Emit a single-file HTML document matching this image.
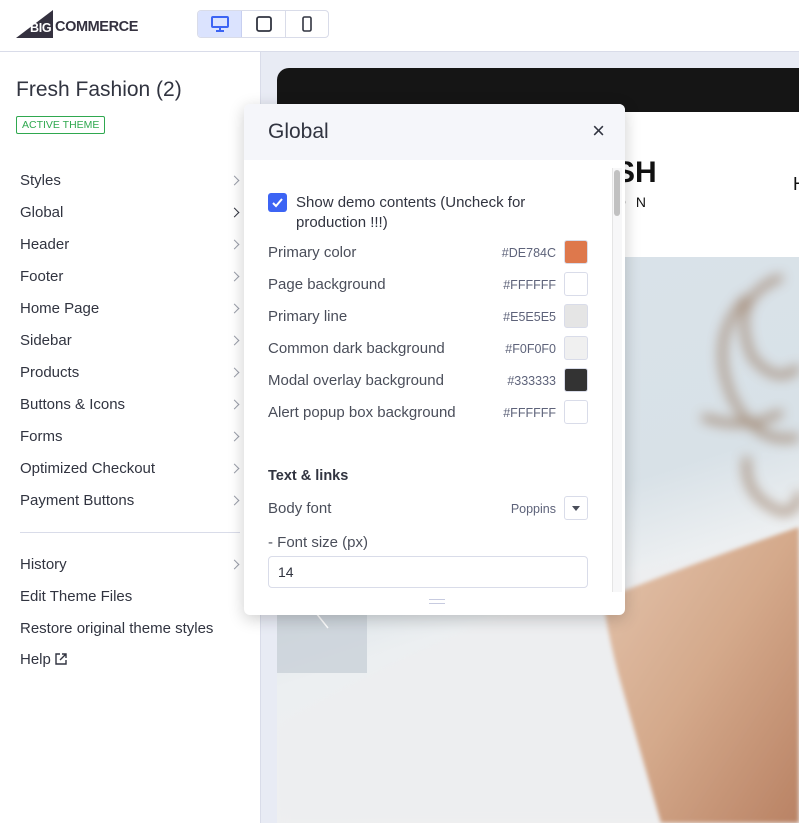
<!DOCTYPE html>
<html><head><meta charset="utf-8"><style>
*{margin:0;padding:0;box-sizing:border-box}
body{width:799px;height:823px;overflow:hidden;font-family:"Liberation Sans",sans-serif;background:#fff;position:relative;color:#313440}
.top{position:absolute;left:0;top:0;width:799px;height:52px;border-bottom:1px solid #d9dce9;background:#fff}
.side{position:absolute;left:0;top:52px;width:261px;height:771px;border-right:1px solid #d9dce9;background:#fff}
.prev{position:absolute;left:261px;top:52px;width:538px;height:771px;background:#e8ebf4;overflow:hidden}
.item{position:absolute;left:20px;font-size:15px;color:#313440}
.chev{position:absolute;left:231px;width:7px;height:7px;border-right:1.5px solid #9a9ea9;border-top:1.5px solid #9a9ea9;transform:rotate(45deg)}
.modal{position:absolute;left:244px;top:104px;width:381px;height:511px;background:#fff;border-radius:6px;box-shadow:0 4px 16px rgba(0,0,0,.2);overflow:hidden}
.mh{height:56px;background:#f5f6fa;padding:16px 24px;font-size:21px;color:#313440}
.row{position:absolute;left:24px;font-size:15px;color:#4a4e5a}
.hex{position:absolute;right:69px;font-size:12.5px;color:#5e637a}
.sw{position:absolute;left:320px;width:24px;height:24px;border:1px solid #d9dce9;border-radius:3px}
</style></head><body>
<div class="top">
 <svg style="position:absolute;left:16px;top:10px" width="40" height="28"><polygon points="0,28 37,28 37,0" fill="#34313f"/></svg>
 <div style="position:absolute;left:30px;top:21px;font-size:12.5px;font-weight:bold;color:#fff;letter-spacing:-0.3px">BIG</div>
 <div style="position:absolute;left:55px;top:19px;font-size:14.5px;font-weight:bold;color:#34313f;letter-spacing:-0.4px">COMMERCE</div>
 <div style="position:absolute;left:197px;top:10px;width:132px;height:28px;border:1px solid #d9dce9;border-radius:4px;display:flex">
  <div style="width:44px;background:#dbe3fe;border-right:1px solid #c7cff0;border-radius:3px 0 0 3px;display:flex;align-items:center;justify-content:center"><svg width="18" height="16"><rect x="1" y="1" width="16" height="10" rx="1" fill="none" stroke="#3c64f4" stroke-width="2"/><rect x="8" y="11" width="2" height="3" fill="#3c64f4"/><rect x="5" y="14" width="8" height="2" fill="#3c64f4"/></svg></div>
  <div style="width:44px;border-right:1px solid #d9dce9;display:flex;align-items:center;justify-content:center"><svg width="16" height="16"><rect x="1" y="1" width="14" height="14" rx="2" fill="none" stroke="#313440" stroke-width="1.8"/></svg></div>
  <div style="width:42px;display:flex;align-items:center;justify-content:center"><svg width="10" height="16"><rect x="1" y="1" width="8" height="14" rx="1.5" fill="none" stroke="#313440" stroke-width="1.6"/></svg></div>
 </div>
</div>
<div class="side">
 <div style="position:absolute;left:16px;top:26px;font-size:21px;color:#313440">Fresh Fashion (2)</div>
 <div style="position:absolute;left:16px;top:64px;border:1px solid #2fa84f;color:#2fa84f;font-size:10.5px;padding:2px 5px;border-radius:2px">ACTIVE THEME</div>
</div>
<div class="item" style="top:172px">Styles</div><div class="chev" style="top:177px"></div>
<div class="item" style="top:204px">Global</div><div class="chev" style="top:209px;border-color:#313440"></div>
<div class="item" style="top:236px">Header</div><div class="chev" style="top:241px"></div>
<div class="item" style="top:268px">Footer</div><div class="chev" style="top:273px"></div>
<div class="item" style="top:300px">Home Page</div><div class="chev" style="top:305px"></div>
<div class="item" style="top:332px">Sidebar</div><div class="chev" style="top:337px"></div>
<div class="item" style="top:364px">Products</div><div class="chev" style="top:369px"></div>
<div class="item" style="top:396px">Buttons &amp; Icons</div><div class="chev" style="top:401px"></div>
<div class="item" style="top:428px">Forms</div><div class="chev" style="top:433px"></div>
<div class="item" style="top:460px">Optimized Checkout</div><div class="chev" style="top:465px"></div>
<div class="item" style="top:492px">Payment Buttons</div><div class="chev" style="top:497px"></div>
<div style="position:absolute;left:20px;top:532px;width:220px;height:1px;background:#d9dce9"></div>
<div class="item" style="top:556px">History</div><div class="chev" style="top:561px"></div>
<div class="item" style="top:588px">Edit Theme Files</div>
<div class="item" style="top:620px">Restore original theme styles</div>
<div class="item" style="top:651px">Help <svg width="12" height="12" style="vertical-align:-1px"><path d="M5 1H1v10h10V7M7 1h4v4M11 1L5 7" fill="none" stroke="#313440" stroke-width="1.4"/></svg></div>
<div class="prev">
 <div style="position:absolute;left:16px;top:16px;width:540px;height:44px;background:#151515;border-radius:12px 0 0 0"></div>
 <div style="position:absolute;left:16px;top:60px;width:540px;height:145px;background:#fff"></div>
 <div style="position:absolute;left:354px;top:104px;font-size:30px;font-weight:bold;color:#111">SH</div>
 <div style="position:absolute;left:354px;top:142px;font-size:14px;letter-spacing:10px;color:#111">ON</div>
 <div style="position:absolute;left:532px;top:122px;font-size:18px;color:#111">H</div>
</div>
<svg style="position:absolute;left:277px;top:257px" width="522" height="566">
 <defs>
  <linearGradient id="bg" x1="0" y1="0" x2="0.3" y2="1"><stop offset="0" stop-color="#dae3ea"/><stop offset="0.55" stop-color="#d8e1e7"/><stop offset="0.7" stop-color="#eceff1"/><stop offset="1" stop-color="#f0f0f1"/></linearGradient>
  <linearGradient id="sk" x1="0" y1="0" x2="1" y2="1"><stop offset="0" stop-color="#e4c4ad"/><stop offset="0.5" stop-color="#d4a98b"/><stop offset="1" stop-color="#b98264"/></linearGradient>
  <filter id="b" x="-20%" y="-20%" width="140%" height="140%"><feGaussianBlur stdDeviation="2"/></filter>
  <filter id="b2" x="-20%" y="-20%" width="140%" height="140%"><feGaussianBlur stdDeviation="6"/></filter>
 </defs>
 <rect width="522" height="566" fill="url(#bg)"/>
 <path d="M0 470 Q150 380 330 320 L522 280 L522 566 L0 566Z" fill="#edeef0" filter="url(#b2)"/>
 <path d="M326 342 Q420 305 522 270 L522 566 L384 566 Q365 500 345 430 Q332 385 326 342Z" fill="url(#sk)" filter="url(#b)"/>
 <g fill="none" stroke="#9a7a62" stroke-width="7" filter="url(#b2)" opacity="0.8">
  <path d="M470 40 Q430 80 455 140 Q480 190 522 180"/>
  <path d="M505 20 Q450 40 475 100 Q500 130 522 110"/>
  <path d="M425 160 Q470 175 505 155"/>
  <path d="M470 200 Q465 240 505 255 Q522 255 522 235"/>
 </g>
 <rect x="0" y="316" width="90" height="100" fill="#c9d1d8" opacity="0.8"/>
 <path d="M51 341L39 356l12 15" fill="none" stroke="#fff" stroke-width="1.5"/>
</svg>
<div class="modal">
 <div class="mh">Global<span style="position:absolute;right:20px;top:14px;font-size:22px;color:#313440">×</span></div>
 <div style="position:absolute;left:368px;top:64px;width:10px;height:424px;background:#f7f7f8;border-left:1px solid #e5e5e5"></div>
 <div style="position:absolute;left:370px;top:66px;width:6px;height:46px;background:#c1c1c1;border-radius:3px"></div>
 <div style="position:absolute;left:24px;top:89px;width:19px;height:19px;background:#3c64f4;border-radius:3px"><svg width="19" height="19"><path d="M5 10l3 3 6-7" fill="none" stroke="#fff" stroke-width="2"/></svg></div>
 <div class="row" style="left:52px;top:89px;line-height:20px;color:#313440">Show demo contents (Uncheck for<br>production !!!)</div>
 <div class="row" style="top:140px">Primary color</div><div class="hex" style="top:142px">#DE784C</div><div class="sw" style="top:136px;background:#de784c"></div>
 <div class="row" style="top:172px">Page background</div><div class="hex" style="top:174px">#FFFFFF</div><div class="sw" style="top:168px;background:#fff"></div>
 <div class="row" style="top:204px">Primary line</div><div class="hex" style="top:206px">#E5E5E5</div><div class="sw" style="top:200px;background:#e5e5e5"></div>
 <div class="row" style="top:236px">Common dark background</div><div class="hex" style="top:238px">#F0F0F0</div><div class="sw" style="top:232px;background:#f0f0f0"></div>
 <div class="row" style="top:268px">Modal overlay background</div><div class="hex" style="top:270px">#333333</div><div class="sw" style="top:264px;background:#333"></div>
 <div class="row" style="top:300px">Alert popup box background</div><div class="hex" style="top:302px">#FFFFFF</div><div class="sw" style="top:296px;background:#fff"></div>
 <div class="row" style="top:364px;color:#313440;font-weight:bold;font-size:14.5px">Text &amp; links</div>
 <div class="row" style="top:396px">Body font</div><div class="hex" style="top:398px">Poppins</div>
 <div class="sw" style="top:392px;background:#fff"><svg width="22" height="22"><path d="M7 9h8l-4 5z" fill="#4a4e5a"/></svg></div>
 <div class="row" style="top:430px">- Font size (px)</div>
 <div style="position:absolute;left:24px;top:452px;width:320px;height:32px;border:1px solid #d9dce9;border-radius:4px;padding:7px 9px;font-size:14px;color:#313440">14</div>
 <div style="position:absolute;left:185px;top:495px;width:16px;height:5px;border-top:1px solid #c7cbe0;border-bottom:1px solid #c7cbe0"></div>
</div>
</body></html>
